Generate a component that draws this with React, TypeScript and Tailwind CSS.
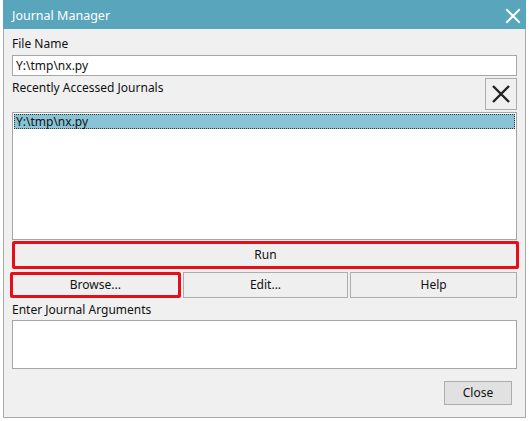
import React from "react";

const font = { fontFamily: '"Noto Sans", "Open Sans", sans-serif' };

export default function App() {
  return (
    <div className="w-[529px] h-[421px] bg-white text-[12px] text-[#111]" style={font}>
      <div className="ml-[3px] w-[523px] flex flex-col">
        <div className="h-[29px] bg-[#58a5bc] flex items-center justify-between pl-[9px] pr-[5px] pt-[3px]">
          <span className="text-white text-[12.5px] leading-none">Journal Manager</span>
          <svg width="16" height="16" viewBox="0 0 16 16">
            <path d="M2 2 L14 14 M14 2 L2 14" stroke="white" strokeWidth="2" strokeLinecap="square" />
          </svg>
        </div>
        <div className="h-[389px] bg-[#f0f0f0] border-x border-b border-[#a9a9a9] px-[8px] pt-[7px] flex flex-col">
          <div className="h-[16px] leading-[16px]">File Name</div>
          <div className="mt-[3px] h-[21px] bg-white border border-[#a6a6a6] flex items-center px-[3px] leading-none">Y:\tmp\nx.py</div>
          <div className="mt-[2px] h-[32px] flex justify-between items-start">
            <div className="pt-[2px] leading-[16px]">Recently Accessed Journals</div>
            <div className="w-[32px] h-[32px] border border-[#adadad] bg-[#f0f0f0] flex items-center justify-center">
              <svg width="20" height="20" viewBox="0 0 20 20">
                <path d="M2 2 L18 18 M18 2 L2 18" stroke="#222" strokeWidth="2.4" />
              </svg>
            </div>
          </div>
          <div className="mt-[2px] h-[128px] bg-white border border-[#a6a6a6] p-[1px]">
            <div className="h-[15px] bg-[#8ac3d5] border border-dotted border-[#333] flex items-center px-[1px] leading-none">Y:\tmp\nx.py</div>
          </div>
          <div className="mt-[1px] h-[28px] w-[507px] border-[3px] border-[#e60f19] rounded-[2px] bg-[#efefef] flex items-center justify-center">Run</div>
          <div className="mt-[3px] h-[26px] flex">
            <div className="ml-[-2px] w-[171px] h-[26px] border-[3px] border-[#e60f19] rounded-[2px] bg-[#efefef] flex items-center justify-center">Browse...</div>
            <div className="ml-[2px] w-[166px] h-[26px] border border-[#adadad] bg-[#efefef] flex items-center justify-center">Edit...</div>
            <div className="ml-[2px] w-[167px] h-[26px] border border-[#adadad] bg-[#efefef] flex items-center justify-center">Help</div>
          </div>
          <div className="mt-[4px] h-[16px] leading-[16px]">Enter Journal Arguments</div>
          <div className="mt-[2px] h-[49px] bg-white border border-[#a6a6a6]"></div>
          <div className="mt-[12px] flex justify-end pr-[5px]">
            <div className="w-[68px] h-[24px] border border-[#adadad] bg-[#e1e1e1] flex items-center justify-center">Close</div>
          </div>
        </div>
      </div>
    </div>
  );
}
